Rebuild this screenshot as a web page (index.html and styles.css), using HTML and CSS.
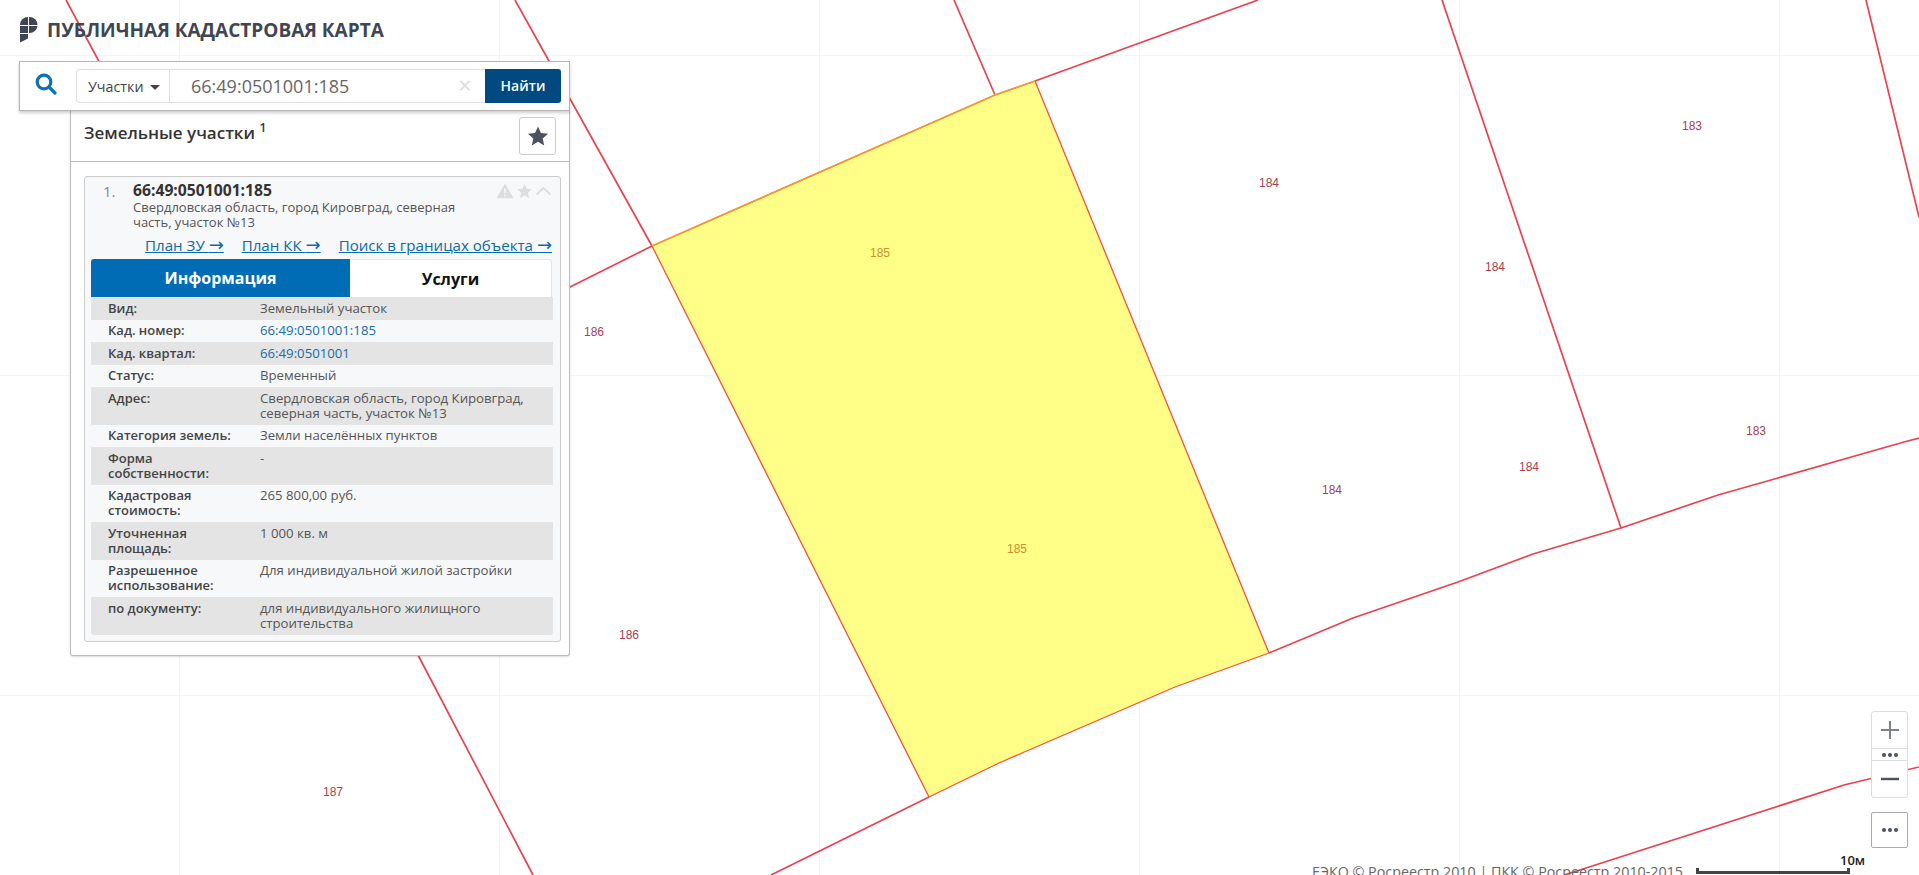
FILE: index.html
```html
<!DOCTYPE html>
<html lang="ru">
<head>
<meta charset="utf-8">
<title>Публичная кадастровая карта</title>
<link rel="stylesheet" href="styles.css">
</head>
<body>
<div class="app">
  <svg class="map" width="1919" height="875" viewBox="0 0 1919 875">
    <g class="parcel-lines">
      <polyline points="515,0 652,246"/>
      <polyline points="66,0 418,655 533,875"/>
      <polyline points="652,246 540,302"/>
      <polyline points="954,0 995,95"/>
      <polyline points="1035,81 1258,0"/>
      <polyline points="929,797 771,875"/>
      <polyline points="1269,653 1353,618 1458,582 1533,554 1621,528 1718,495 1778,478 1904,442 1919,438"/>
      <polyline points="1442,0 1621,528"/>
      <polyline points="1866,0 1919,217"/>
      <polyline points="1564,875 1586,868 1844,785 1919,767"/>
    </g>
    <polygon class="selected" points="652,246 995,95 1035,81 1269,653 1175,687 999,763 929,797"/>
    <polyline class="selected-top" points="652,246 995,95 1035,81"/>
    <g class="labels">
      <text x="594" y="336">186</text>
      <text x="1269" y="187">184</text>
      <text x="1692" y="130">183</text>
      <text x="1495" y="271">184</text>
      <text x="1756" y="435">183</text>
      <text x="1332" y="494">184</text>
      <text x="1529" y="471">184</text>
      <text x="629" y="639">186</text>
      <text x="333" y="796">187</text>
      <text class="on-selected" x="880" y="257">185</text>
      <text class="on-selected" x="1017" y="553">185</text>
    </g>
  </svg>

  <div class="sidebar">
    <header class="brand">
      <svg class="brand-logo" width="18" height="26" viewBox="0 0 18 26">
        <path d="M0 8A8 8 0 0 1 8 0V8Z"/>
        <path d="M9 0H9.5A8 8 0 0 1 17.5 8H9Z"/>
        <path d="M9 9H17.5A8 8 0 0 1 9.5 16H9Z"/>
        <path d="M0 9H8V16H0Z"/>
        <path d="M0 17H8V21.5L0 25.5Z"/>
      </svg>
      <span class="brand-title">ПУБЛИЧНАЯ КАДАСТРОВАЯ КАРТА</span>
    </header>

    <div class="search">
      <svg class="search-icon" width="22" height="22" viewBox="0 0 22 22">
        <circle cx="9" cy="9" r="6.8"/>
        <path d="M14 14L20 20"/>
      </svg>
      <div class="search-field">
        <div class="search-type">Участки<span class="caret"></span></div>
        <div class="search-value">66:49:0501001:185</div>
        <div class="search-clear">×</div>
        <div class="search-button">Найти</div>
      </div>
    </div>

    <section class="panel">
      <div class="panel-head">
        <div class="panel-title">Земельные участки <sup>1</sup></div>
        <div class="fav-button">
          <svg width="22" height="22" viewBox="0 0 24 24"><path d="M12 1.5l3.2 7.2 7.8.8-5.9 5.2 1.7 7.7L12 18.4l-6.8 4 1.7-7.7L1 9.5l7.8-.8z"/></svg>
        </div>
      </div>
      <article class="card">
        <div class="card-top">
          <div class="card-num">1.</div>
          <div class="card-main">
            <div class="card-id">66:49:0501001:185</div>
            <div class="card-addr">Свердловская область, город Кировград, северная часть, участок №13</div>
          </div>
          <div class="card-icons">
            <svg width="18" height="16" viewBox="0 0 18 16"><path class="tri" d="M9 1.5L16.8 14.8H1.2Z"/><path class="tri-mark" d="M9 5.5V10.5M9 11.8V13.3"/></svg>
            <svg width="17" height="16" viewBox="0 0 24 24"><path class="ico" d="M12 1.5l3.2 7.2 7.8.8-5.9 5.2 1.7 7.7L12 18.4l-6.8 4 1.7-7.7L1 9.5l7.8-.8z"/></svg>
            <svg width="17" height="16" viewBox="0 0 17 16"><path class="chev" d="M1.5 11.5L8.5 5L15.5 11.5"/></svg>
          </div>
        </div>
        <nav class="card-links">
          <a href="#">План ЗУ <span class="arrow">→</span></a>
          <a href="#">План КК <span class="arrow">→</span></a>
          <a href="#">Поиск в границах объекта <span class="arrow">→</span></a>
        </nav>
        <div class="tabs">
          <div class="tab tab-active">Информация</div>
          <div class="tab">Услуги</div>
        </div>
        <div class="info">
          <div class="row"><div class="key">Вид:</div><div class="val">Земельный участок</div></div>
          <div class="row"><div class="key">Кад. номер:</div><div class="val"><a href="#">66:49:0501001:185</a></div></div>
          <div class="row"><div class="key">Кад. квартал:</div><div class="val"><a href="#">66:49:0501001</a></div></div>
          <div class="row"><div class="key">Статус:</div><div class="val">Временный</div></div>
          <div class="row"><div class="key">Адрес:</div><div class="val">Свердловская область, город Кировград, северная часть, участок №13</div></div>
          <div class="row"><div class="key">Категория земель:</div><div class="val">Земли населённых пунктов</div></div>
          <div class="row"><div class="key">Форма собственности:</div><div class="val">-</div></div>
          <div class="row"><div class="key">Кадастровая стоимость:</div><div class="val">265 800,00 руб.</div></div>
          <div class="row"><div class="key">Уточненная площадь:</div><div class="val">1 000 кв. м</div></div>
          <div class="row"><div class="key">Разрешенное использование:</div><div class="val">Для индивидуальной жилой застройки</div></div>
          <div class="row"><div class="key">по документу:</div><div class="val">для индивидуального жилищного строительства</div></div>
        </div>
      </article>
    </section>
  </div>

  <div class="map-tools">
    <div class="zoom">
      <div class="zoom-btn"><svg width="18" height="18" viewBox="0 0 18 18"><path class="plus" d="M9 0V18M0 9H18"/></svg></div>
      <div class="zoom-dots"><span class="dots dots-small"><i></i><i></i><i></i></span></div>
      <div class="zoom-btn"><svg width="18" height="18" viewBox="0 0 18 18"><path class="minus" d="M0 9H18"/></svg></div>
    </div>
    <div class="more"><span class="dots"><i></i><i></i><i></i></span></div>
  </div>

  <div class="attribution">ЕЭКО © Росреестр 2010 | ПКК © Росреестр 2010-2015</div>
  <div class="scale"><span class="scale-label">10м</span></div>
</div>
</body>
</html>
```
FILE: styles.css
```css
* { box-sizing: border-box; }
html, body { margin: 0; padding: 0; height: 100%; overflow: hidden; background: #fff; }
body { font-family: "Open Sans", "Liberation Sans", sans-serif; color: #333; }
a { color: #0b6aa8; }

.app {
  position: relative;
  width: 1919px;
  height: 875px;
  overflow: hidden;
  background-color: #fff;
  background-image: linear-gradient(#f4f4f4 1px, transparent 1px), linear-gradient(90deg, #f4f4f4 1px, transparent 1px);
  background-size: 320px 320px;
  background-position: 179px 55px;
}

/* map canvas */
.map { position: absolute; left: 0; top: 0; }
.parcel-lines polyline { fill: none; stroke: #e8424f; stroke-width: 1.7; }
.selected { fill: #ffff88; stroke: #f4533c; stroke-width: 1.3; stroke-linejoin: round; }
.selected-top { fill: none; stroke: #f29a2e; stroke-width: 1.6; }
.labels text { font-family: "Liberation Sans", sans-serif; font-size: 12px; text-anchor: middle; fill: #a8404e; }
.labels .on-selected { fill: #c8902c; }

/* left column */
.sidebar { position: absolute; left: 19px; top: 0; width: 551px; }
.brand { display: flex; align-items: center; height: 61px; padding: 0 0 1px 1px; }
.brand-logo { fill: #3f4652; }
.brand-title { margin-left: 9px; font-size: 19px; font-weight: 700; color: #3f4652; white-space: nowrap; }

.search {
  display: flex;
  align-items: center;
  height: 50px;
  padding: 0 8px 0 15px;
  background: #fff;
  border: 1px solid #b5b5b5;
  box-shadow: 0 2px 3px rgba(0, 0, 0, .2);
  position: relative;
  z-index: 2;
}
.search-icon { flex: none; fill: none; stroke: #0f72b5; stroke-width: 3.2; stroke-linecap: round; margin-bottom: 5px; }
.search-field {
  display: flex;
  align-items: stretch;
  flex: 1;
  height: 34px;
  margin-left: 19px;
  border: 1px solid #ddd;
  border-radius: 3px;
}
.search-type {
  display: flex;
  align-items: center;
  width: 93px;
  padding-left: 11px;
  border-right: 1px solid #ddd;
  font-size: 14.3px;
  color: #444;
}
.caret { margin: 2px 0 0 6px; border: 5px solid transparent; border-top: 5px solid #444; border-bottom: 0; }
.search-value { flex: 1; padding-left: 21px; font-size: 18px; line-height: 32px; color: #666; }
.search-clear { width: 36px; padding-left: 9px; font-size: 24px; line-height: 30px; color: #ddd; }
.search-button {
  width: 76px;
  margin: -1px -1px -1px 0;
  border-radius: 0 3px 3px 0;
  background: #004a7f;
  color: #fff;
  font-size: 14px;
  font-weight: 600;
  line-height: 33px;
  text-align: center;
}

.panel {
  margin-left: 51px;
  height: 545px;
  background: #fff;
  border: 1px solid #bbb;
  border-top: 0;
  border-radius: 0 0 3px 3px;
  box-shadow: 0 1px 2px rgba(0, 0, 0, .15);
}
.panel-head {
  display: flex;
  align-items: center;
  justify-content: space-between;
  height: 51px;
  padding: 0 13px;
  border-bottom: 1px solid #bbb;
}
.panel-title { font-size: 17px; font-weight: 600; color: #333; margin-bottom: 8px; }
.panel-title sup { font-size: 12px; line-height: 0; }
.fav-button {
  display: flex;
  align-items: center;
  justify-content: center;
  width: 37px;
  height: 38px;
  border: 1px solid #ccc;
  border-radius: 3px;
}
.fav-button svg { fill: #4a5160; }

.card {
  height: 466px;
  margin: 14px 8px 0 13px;
  padding: 4px 8px 0 6px;
  background: #f7f8fa;
  border: 1px solid #ccc;
  border-radius: 3px;
}
.card-top { display: flex; position: relative; }
.card-num { width: 42px; padding-left: 12px; font-size: 15px; line-height: 20px; color: #888; }
.card-main { width: 345px; }
.card-id { font-size: 15.7px; line-height: 19px; font-weight: 700; color: #333; }
.card-addr { font-size: 13px; line-height: 15px; color: #555; }
.card-icons { position: absolute; right: 0; top: 2px; display: flex; align-items: center; gap: 2px; }
.tri { fill: #ddd; stroke: #ddd; stroke-width: 1; stroke-linejoin: round; }
.tri-mark { stroke: #f7f8fa; stroke-width: 1.6; fill: none; }
.ico { fill: #ddd; }
.chev { fill: none; stroke: #ddd; stroke-width: 2; }

.card-links { display: flex; justify-content: flex-end; gap: 18px; height: 24px; margin-top: 5px; font-size: 15.1px; line-height: 20px; }
.card-links a { color: #0b6aa8; }
.arrow { font-family: "DejaVu Sans", sans-serif; font-size: 18px; line-height: 0; }

.tabs { display: flex; height: 38px; width: 461px; background: #fff; border: 1px solid #e4e4e4; border-bottom: 0; border-radius: 3px 3px 0 0; }
.tab { flex: 1; display: flex; align-items: center; justify-content: center; font-size: 16px; font-weight: 700; color: #111; }
.tab-active { flex: none; width: 259px; margin: -1px 0 0 -1px; background: #006cb5; color: #fff; border-radius: 3px 0 0 0; }

.info { width: 462px; border-radius: 0 0 3px 3px; overflow: hidden; }
.row { display: flex; padding: 3.75px 0 3.75px 17px; font-size: 13px; line-height: 15px; }
.row:nth-child(odd) { background: #e4e4e4; }
.key { width: 152px; padding-right: 24px; font-weight: 600; color: #444; }
.val { flex: 1; padding-right: 10px; color: #555; font-size: 13.2px; }
.val a { text-decoration: none; color: #1a6aa5; }

/* map controls */
.map-tools { position: absolute; left: 1871px; top: 711px; width: 37px; display: flex; flex-direction: column; gap: 14px; }
.zoom { background: #fff; border: 1px solid #ddd; border-radius: 3px; }
.zoom-btn { display: flex; align-items: center; justify-content: center; height: 36px; }
.plus { stroke: #7d8289; stroke-width: 2; fill: none; }
.minus { stroke: #4a5160; stroke-width: 2.4; fill: none; }
.zoom-dots { display: flex; align-items: center; justify-content: center; height: 13px; border-top: 1px solid #ddd; border-bottom: 1px solid #ddd; }
.more { display: flex; align-items: center; justify-content: center; height: 36px; background: #fff; border: 1px solid #aaa; border-radius: 2px; }
.dots { display: flex; gap: 2px; }
.dots i { width: 4px; height: 4px; border-radius: 50%; background: #4a5160; }

.attribution { position: absolute; left: 1312px; top: 862px; font-size: 14.3px; line-height: 20px; color: #666; white-space: nowrap; }
.scale {
  position: absolute;
  left: 1696px;
  top: 868px;
  width: 154px;
  height: 6px;
  border: 3px solid #444;
  border-top: 0;
}
.scale-label { position: absolute; left: 141px; top: -16px; font-size: 13px; font-weight: 600; line-height: 16px; color: #222; }
```
